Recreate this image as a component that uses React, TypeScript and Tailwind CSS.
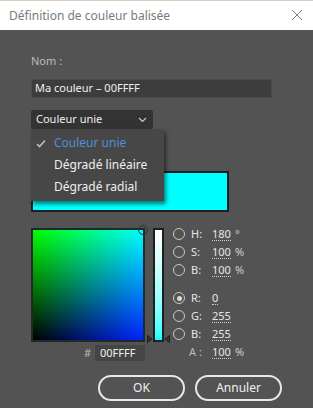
import React from 'react';

const font = { fontFamily: '"Noto Sans", "Open Sans", sans-serif' };

const Radio = ({ checked }: { checked?: boolean }) => (
  <span className="relative flex h-[12px] w-[12px] items-center justify-center rounded-full border border-[#c8c8c8]">
    {checked && <span className="h-[5px] w-[5px] rounded-full bg-[#d8d8d8]" />}
  </span>
);

const Row = ({ label, value, unit, checked }: { label: string; value: string; unit?: string; checked?: boolean }) => (
  <div className="flex h-[18px] items-center">
    <Radio checked={checked} />
    <span className="ml-[6px] w-[21px] text-[#e6e6e6]">{label}</span>
    <span className="border-b border-dotted border-[#cfcfcf] leading-[12px] text-[#e6e6e6]">{value}</span>
    {unit && <span className="ml-[4px] text-[#cfcfcf]">{unit}</span>}
  </div>
);

export default function App() {
  return (
    <div className="h-[408px] w-[313px] overflow-hidden bg-[#535353] text-[11px]" style={font}>
      {/* title bar */}
      <div className="flex h-[30px] items-center justify-between border-t border-[#d8cfc0] bg-white pl-[9px] pr-[10px]">
        <span className="text-[12px] text-[#7a7a7a]">Définition de couleur balisée</span>
        <svg width="12" height="12" viewBox="0 0 12 12" className="mb-[2px]">
          <path d="M1 1 L11 11 M11 1 L1 11" stroke="#808080" strokeWidth="1" />
        </svg>
      </div>

      <div className="relative px-[31px] pt-[23px]">
        <div className="h-[16px] text-[#bdbdbd]">Nom :</div>
        <div className="mt-[10px] flex h-[19px] w-[241px] items-center rounded-[2px] border border-[#4a4a4a] bg-[#3d3d3d] pl-[3px] text-[#f0f0f0]">
          Ma couleur – 00FFFF
        </div>

        <div className="mt-[12px] flex h-[19px] w-[122px] items-center justify-between rounded-[2px] bg-[#333333] pl-[5px] pr-[6px] text-[#f0f0f0]">
          <span>Couleur unie</span>
          <svg width="9" height="6" viewBox="0 0 9 6">
            <path d="M1 1 L4.5 4.5 L8 1" stroke="#d0d0d0" strokeWidth="1.1" fill="none" />
          </svg>
        </div>

        {/* swatch */}
        <div className="mt-[42px] h-[41px] w-[198px] border-2 border-[#1e1e1e] bg-[#00ffff]" />

        {/* picker */}
        <div className="mt-[16px] flex">
          <div className="flex flex-col items-end">
            <div
              className="relative h-[114px] w-[114px] border-2 border-[#1e2a2a]"
              style={{
                background: 'linear-gradient(to right, #000000, #0022ff), linear-gradient(to bottom, #00ff00, #000000)',
                backgroundBlendMode: 'screen',
              }}
            >
              <div className="absolute -right-[5px] -top-[5px] h-[10px] w-[10px] rounded-full border border-[#333]" />
            </div>
            <div className="mt-[3px] flex items-center">
              <span className="mr-[4px] text-[#bdbdbd]">#</span>
              <div className="flex h-[16px] w-[50px] items-center bg-[#454545] pl-[5px] text-[#f0f0f0]">00FFFF</div>
            </div>
          </div>

          <div className="relative ml-[8px] h-[114px] w-[11px] border-2 border-[#1e1e1e] bg-gradient-to-b from-white to-[#00ffff]">
            <svg width="6" height="8" viewBox="0 0 6 8" className="absolute -left-[8px] bottom-[-3px]">
              <path d="M0.5 0.5 L5 4 L0.5 7.5 Z" fill="#2a3a3a" stroke="#1e1e1e" />
            </svg>
            <svg width="6" height="8" viewBox="0 0 6 8" className="absolute -right-[8px] bottom-[-3px]">
              <path d="M5.5 0.5 L1 4 L5.5 7.5 Z" fill="#2a3a3a" stroke="#1e1e1e" />
            </svg>
          </div>

          <div className="ml-[9px] -mt-[3px] flex flex-col">
            <Row label="H:" value="180" unit="°" />
            <Row label="S:" value="100" unit="%" />
            <Row label="B:" value="100" unit="%" />
            <div className="h-[10px]" />
            <Row label="R:" value="0" checked />
            <Row label="G:" value="255" />
            <Row label="B:" value="255" />
            <div className="flex h-[18px] items-center pl-[16px]">
              <span className="w-[23px] text-[#bdbdbd]">A :</span>
              <span className="border-b border-dotted border-[#cfcfcf] leading-[12px] text-[#e6e6e6]">100</span>
              <span className="ml-[4px] text-[#cfcfcf]">%</span>
            </div>
          </div>
        </div>

        {/* buttons */}
        <div className="mt-[13px] flex gap-[10px] pl-[67px]">
          <button className="h-[26px] w-[92px] rounded-full border-2 border-[#e8e8e8] text-[12px] text-[#f0f0f0]">OK</button>
          <button className="h-[26px] w-[92px] rounded-full border-2 border-[#e8e8e8] text-[12px] text-[#f0f0f0]">Annuler</button>
        </div>

        {/* open dropdown menu */}
        <div className="absolute left-[31px] top-[99px] w-[133px] bg-[#474747] py-[3px] shadow-[2px_3px_4px_rgba(0,0,0,0.5)]">
          <div className="flex h-[22px] items-center text-[12px] text-[#4f8fd8]">
            <svg width="10" height="9" viewBox="0 0 10 9" className="ml-[5px] mr-[8px]">
              <path d="M1 5 L3.5 7.5 L9 1.5" stroke="#c0c0c0" strokeWidth="1.6" fill="none" />
            </svg>
            Couleur unie
          </div>
          <div className="flex h-[22px] items-center pl-[23px] text-[12px] text-[#f0f0f0]">Dégradé linéaire</div>
          <div className="flex h-[22px] items-center pl-[23px] text-[12px] text-[#f0f0f0]">Dégradé radial</div>
        </div>
      </div>
    </div>
  );
}
